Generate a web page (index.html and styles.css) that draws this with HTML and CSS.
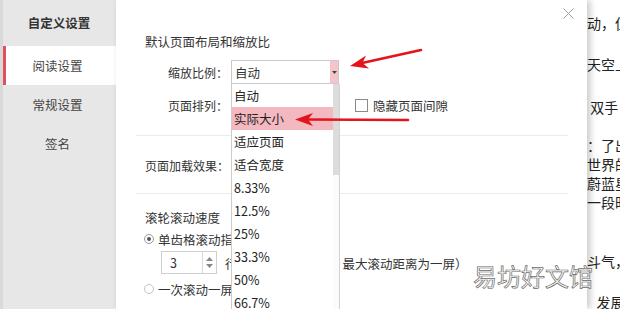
FILE: index.html
```html
<!DOCTYPE html>
<html lang="zh-CN">
<head>
    <meta charset="UTF-8">
    <meta name="viewport" content="width=device-width, initial-scale=1.0">
    <title>自定义设置</title>
    <link rel="stylesheet" href="styles.css">
</head>
<body>
<div class="app">

    <div class="sidebar">
        <div class="side-title">自定义设置</div>
        <div class="side-item active">阅读设置</div>
        <div class="side-item">常规设置</div>
        <div class="side-item">签名</div>
    </div>

    <div class="dialog">
        <svg class="close" width="11" height="11" viewBox="0 0 11 11">
            <path d="M0.5 0.5 L10.5 10.5 M10.5 0.5 L0.5 10.5" stroke="#a0a0a0" stroke-width="1" fill="none"/>
        </svg>

        <div class="section first">
            <div class="heading">默认页面布局和缩放比</div>
            <div class="row">
                <span class="label">缩放比例：</span>
                <div class="select">
                    <span class="select-text">自动</span>
                    <span class="select-btn">
                        <svg width="5" height="3" viewBox="0 0 5 3"><path d="M0 0 H5 L2.5 3 Z" fill="#444"/></svg>
                    </span>
                </div>
            </div>
            <div class="row">
                <span class="label">页面排列：</span>
                <div class="select"></div>
                <span class="checkbox"></span>
                <span>隐藏页面间隙</span>
            </div>
        </div>

        <div class="section second">
            <div class="row text-row">
                <span class="label">页面加载效果：</span>
            </div>
        </div>

        <div class="section third">
            <div class="heading">滚轮滚动速度</div>
            <div class="radio-row">
                <span class="radio checked"></span>
                <span>单齿格滚动指定行数</span>
            </div>
            <div class="spin-row">
                <div class="spinner">
                    <span class="spin-value">3</span>
                    <span class="spin-btns">
                        <svg width="7" height="4" viewBox="0 0 7 4"><path d="M0 4 L3.5 0 L7 4 Z" fill="#888"/></svg>
                        <svg width="7" height="4" viewBox="0 0 7 4"><path d="M0 0 H7 L3.5 4 Z" fill="#888"/></svg>
                    </span>
                </div>
                <span class="unit">行</span>
                <span class="hint">最大滚动距离为一屏）</span>
            </div>
            <div class="radio-row second-radio">
                <span class="radio"></span>
                <span>一次滚动一屏</span>
            </div>
        </div>

        <div class="dropdown">
            <div class="dd-list">
                <div class="dd-item">自动</div>
                <div class="dd-item selected">实际大小</div>
                <div class="dd-item">适应页面</div>
                <div class="dd-item">适合宽度</div>
                <div class="dd-item">8.33%</div>
                <div class="dd-item">12.5%</div>
                <div class="dd-item">25%</div>
                <div class="dd-item">33.3%</div>
                <div class="dd-item">50%</div>
                <div class="dd-item">66.7%</div>
            </div>
            <div class="dd-scroll">
                <div class="dd-thumb"></div>
            </div>
        </div>
    </div>

    <div class="doc">
        <p class="p1">动，但</p>
        <p class="p2">天空上</p>
        <p class="p3">&nbsp;双手</p>
        <p class="p4">：了出</p>
        <p>世界的</p>
        <p>蔚蓝星</p>
        <p>一段时</p>
        <p class="p8">斗气，</p>
        <p class="p9">&nbsp;&nbsp;&nbsp;发展</p>
    </div>

    <div class="watermark">易坊好文馆</div>

    <svg class="arrows" width="620" height="309" viewBox="0 0 620 309">
        <path d="M421 50 L362 63" stroke="#e3141b" stroke-width="2.6" stroke-linecap="round" fill="none"/>
        <path d="M350 66 L366 55.5 L362.5 63 L369 68.5 Z" fill="#e3141b"/>
        <path d="M408 120 L307 119.5" stroke="#e3141b" stroke-width="2.6" stroke-linecap="round" fill="none"/>
        <path d="M295 119.5 L313 113 L308 119.5 L313 126 Z" fill="#e3141b"/>
    </svg>

</div>
</body>
</html>
```

FILE: styles.css
```css
body {
    margin: 0;
    font-family: "Noto Sans CJK SC", "Noto Sans", sans-serif;
    font-size: 12.5px;
    color: #333;
    overflow: hidden;
}
.app {
    display: flex;
    width: 620px;
    height: 309px;
    position: relative;
    overflow: hidden;
}

/* left menu */
.sidebar {
    width: 116px;
    flex: none;
    box-sizing: border-box;
    background-color: #e7e7e7;
    border-left: 3px solid #d9d9d9;
}
.side-title {
    height: 46px;
    line-height: 46px;
    text-align: center;
    font-weight: bold;
    padding-right: 1px;
    color: #333;
}
.side-item {
    height: 39px;
    line-height: 39px;
    text-align: center;
    border-left: 3px solid transparent;
    padding-right: 7px;
    color: #444;
}
.side-item.active {
    background-color: #fff;
    border-left-color: #e0505f;
}

/* dialog */
.dialog {
    width: 471px;
    flex: none;
    background-color: #fff;
    position: relative;
    z-index: 1;
    box-shadow: 3px 0 7px rgba(0, 0, 0, 0.22);
    white-space: nowrap;
}
.close {
    position: absolute;
    left: 447px;
    top: 8px;
}
.section {
    margin: 0 19px 0 20px;
    padding-left: 9px;
}
.section.first {
    padding-top: 33px;
    padding-bottom: 18px;
    border-bottom: 1px solid #ebebeb;
}
.section.second {
    padding-top: 20px;
    padding-bottom: 19px;
    border-bottom: 1px solid #ebebeb;
}
.section.third {
    padding-top: 15px;
}
.heading {
    line-height: 18px;
}
.row {
    display: flex;
    align-items: center;
    height: 24px;
    margin-top: 9px;
}
.section.first .row:first-of-type {
    margin-top: 10px;
}
.text-row {
    height: 18px;
    margin-top: 0;
}
.label {
    width: 83px;
    font-size: 12px;
    text-align: right;
    margin-right: 3px;
    flex: none;
}
.text-row .label {
    width: auto;
}
.select {
    width: 108px;
    height: 24px;
    box-sizing: border-box;
    border: 1px solid #c9c9c9;
    display: flex;
    align-items: center;
    justify-content: space-between;
}
.select-text {
    padding-left: 3px;
}
.select-btn {
    width: 8px;
    height: 100%;
    background-color: #f4c6cc;
    display: flex;
    align-items: center;
    justify-content: center;
}
.checkbox {
    width: 11px;
    height: 11px;
    border: 1px solid #8a8a8a;
    margin-left: 16px;
    margin-right: 5px;
    background-color: #fff;
}

/* scroll speed */
.radio-row {
    display: flex;
    align-items: center;
    height: 18px;
    margin-top: 3px;
}
.radio-row.second-radio {
    margin-top: 6px;
}
.radio {
    width: 8px;
    height: 8px;
    border: 1px solid #c4c4c4;
    border-radius: 50%;
    margin-left: -1px;
    margin-right: 4px;
    background-color: #fff;
    position: relative;
}
.radio.checked {
    border-color: #9a9a9a;
}
.radio.checked::after {
    content: "";
    position: absolute;
    left: 2px;
    top: 2px;
    width: 4px;
    height: 4px;
    border-radius: 50%;
    background-color: #555;
}
.spin-row {
    display: flex;
    align-items: center;
    margin-top: 3px;
    padding-left: 16px;
    height: 23px;
}
.spinner {
    width: 56px;
    height: 23px;
    box-sizing: border-box;
    border: 1px solid #cfcfcf;
    display: flex;
    justify-content: space-between;
}
.spin-value {
    line-height: 21px;
    padding-left: 8px;
}
.spin-btns {
    width: 13px;
    border-left: 1px solid #dadada;
    display: flex;
    flex-direction: column;
    align-items: center;
    justify-content: space-around;
    padding: 3px 0;
}
.unit {
    margin-left: 8px;
    margin-top: 2px;
}
.hint {
    margin-left: 105px;
    margin-top: 2px;
}

/* open list of the zoom select */
.dropdown {
    position: absolute;
    left: 115px;
    top: 84px;
    width: 109px;
    height: 240px;
    box-sizing: border-box;
    background-color: #fff;
    border-left: 1px solid #cbcbcb;
    border-right: 1px solid #d2d2d2;
    display: flex;
    z-index: 2;
}
.dd-list {
    flex: 1;
}
.dd-item {
    height: 23px;
    line-height: 23px;
    padding-left: 2px;
    color: #222;
}
.dd-item.selected {
    background-color: #f3b8c0;
}
.dd-scroll {
    width: 6px;
    background-color: #fbfbfb;
}
.dd-thumb {
    height: 91px;
    background-color: #dcdcdc;
}

/* document behind the dialog */
.doc {
    flex: 1;
    background-color: #fff;
    overflow: hidden;
    white-space: nowrap;
    font-size: 14px;
    color: #222;
    padding-top: 14px;
}
.doc p {
    margin: 0;
    line-height: 19px;
}
.doc .p2 { margin-top: 22px; }
.doc .p3 { margin-top: 24px; }
.doc .p4 { margin-top: 19px; }
.doc .p8 { margin-top: 40px; }
.doc .p9 { margin-top: 22px; }

.watermark {
    position: absolute;
    left: 473px;
    top: 261px;
    font-size: 24px;
    line-height: 30px;
    color: #fff;
    -webkit-text-stroke: 0.7px #6a6a6a;
    z-index: 3;
}
.arrows {
    position: absolute;
    left: 0;
    top: 0;
    z-index: 4;
    pointer-events: none;
}
```
